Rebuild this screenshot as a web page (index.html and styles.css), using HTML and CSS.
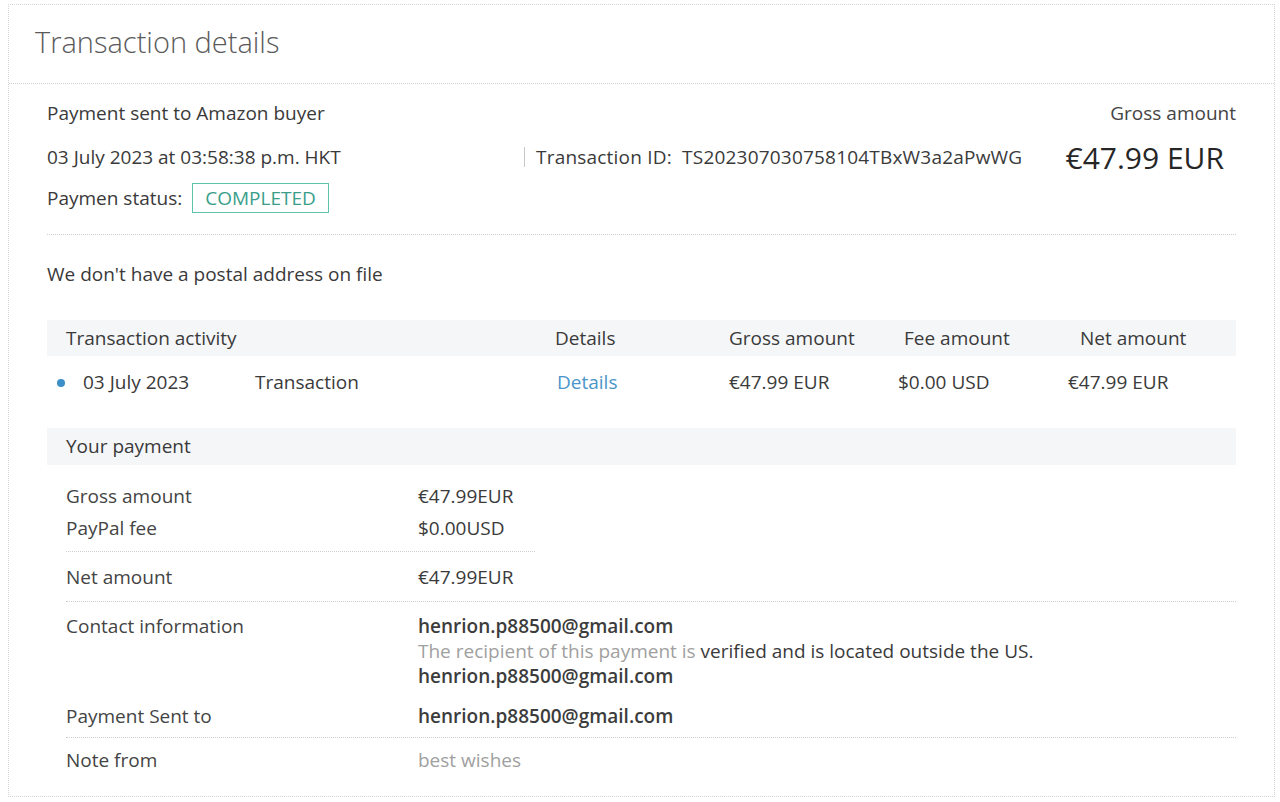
FILE: index.html
```html
<!DOCTYPE html>
<html lang="en">
<head>
    <meta charset="UTF-8">
    <title>Transaction details</title>
    <link rel="stylesheet" href="styles.css">
</head>
<body>
    <div class="card">
        <div class="card-head">
            <h1>Transaction details</h1>
        </div>

        <div class="card-body">
            <div class="summary">
                <div class="sum-row">
                    <span>Payment sent to Amazon buyer</span>
                    <span class="gross-label">Gross amount</span>
                </div>
                <div class="sum-row date-row">
                    <span class="date">03 July 2023 at 03:58:38 p.m. HKT</span>
                    <span class="txid">Transaction ID:&nbsp;&nbsp;TS202307030758104TBxW3a2aPwWG</span>
                    <span class="gross-value">€47.99 EUR</span>
                </div>
                <div class="sum-row status-row">
                    <span>Paymen status:</span>
                    <span class="badge">COMPLETED</span>
                </div>
            </div>

            <p class="address">We don't have a postal address on file</p>

            <div class="activity">
                <div class="act-row act-head">
                    <span>Transaction activity</span>
                    <span class="shift-2">Details</span>
                    <span>Gross amount</span>
                    <span class="shift-6">Fee amount</span>
                    <span class="shift-12">Net amount</span>
                </div>
                <div class="act-row act-item">
                    <span class="act-main">
                        <span class="dot"></span>
                        <span class="act-date">03 July 2023</span>
                        <span>Transaction</span>
                    </span>
                    <a href="#" class="link">Details</a>
                    <span>€47.99 EUR</span>
                    <span>$0.00 USD</span>
                    <span>€47.99 EUR</span>
                </div>
            </div>

            <div class="section-bar">Your payment</div>

            <div class="pay-block pay-short">
                <div class="pay-row"><span class="pay-label">Gross amount</span><span>€47.99EUR</span></div>
                <div class="pay-row"><span class="pay-label">PayPal fee</span><span>$0.00USD</span></div>
            </div>
            <div class="pay-block pay-net">
                <div class="pay-row"><span class="pay-label">Net amount</span><span>€47.99EUR</span></div>
            </div>
            <div class="pay-block pay-contact">
                <div class="pay-row">
                    <span class="pay-label">Contact information</span>
                    <div class="pay-lines">
                        <span class="email">henrion.p88500@gmail.com</span>
                        <span><span class="muted">The recipient of this payment is</span> verified and is located outside the US.</span>
                        <span class="email">henrion.p88500@gmail.com</span>
                    </div>
                </div>
                <div class="pay-row sent-row">
                    <span class="pay-label">Payment Sent to</span>
                    <span class="email">henrion.p88500@gmail.com</span>
                </div>
            </div>
            <div class="pay-block pay-note">
                <div class="pay-row"><span class="pay-label">Note from</span><span class="muted">best wishes</span></div>
            </div>
        </div>
    </div>
</body>
</html>
```

FILE: styles.css
```css
* {
    margin: 0;
    padding: 0;
    box-sizing: border-box;
}

body {
    font-family: 'Open Sans', 'Noto Sans', sans-serif;
    font-size: 19px;
    line-height: 25px;
    color: #3a3a3a;
    background: #fff;
    padding: 4px 5px 5px 8px;
}

.card {
    border: 1px dotted #d4d4d4;
    height: 793px;
}

.card-head {
    height: 79px;
    border-bottom: 1px dotted #d0d0d0;
    padding: 18px 0 0 26px;
}

.card-head h1 {
    font-size: 29px;
    font-weight: 300;
    line-height: 38px;
    color: #5a5a5a;
}

.card-body {
    padding: 14px 38px 0 38px;
}

/* summary */
.summary {
    border-bottom: 1px dotted #d0d0d0;
    padding-bottom: 17px;
}

.sum-row {
    display: flex;
    align-items: center;
    height: 30px;
}

.gross-label {
    margin-left: auto;
    color: #444;
}

.date-row {
    height: 44px;
    margin-top: 7px;
}

.date {
    width: 477px;
}

.txid {
    border-left: 1px solid #c8c8c8;
    padding-left: 11px;
    line-height: 20px;
    letter-spacing: 0.2px;
}

.gross-value {
    margin-left: auto;
    margin-right: 12px;
    font-size: 30px;
    color: #262626;
}

.status-row {
    height: 38px;
}

.badge {
    margin-left: 10px;
    border: 1px solid #5cc4ad;
    color: #3a9e8a;
    padding: 2px 12px;
    line-height: 24px;
}

.address {
    padding: 27px 0 33px;
}

/* activity table */
.act-row {
    display: grid;
    grid-template-columns: 491px 172px 169px 170px 1fr;
    align-items: center;
    padding-left: 19px;
}

.act-head {
    background: #f5f6f8;
    height: 36px;
}

.shift-2 { margin-left: -2px; }
.shift-6 { margin-left: 6px; }
.shift-12 { margin-left: 12px; }

.act-item {
    height: 53px;
}

.act-main {
    display: flex;
    align-items: center;
    margin-left: -9px;
}

.dot {
    width: 8px;
    height: 8px;
    border-radius: 50%;
    background: #3d8fca;
    margin-right: 18px;
}

.act-date {
    width: 172px;
}

.link {
    color: #4a95c9;
    text-decoration: none;
}

.section-bar {
    margin-top: 19px;
    background: #f5f6f8;
    height: 37px;
    line-height: 37px;
    padding-left: 19px;
}

/* your payment */
.pay-block {
    margin-left: 19px;
}

.pay-row {
    display: flex;
}

.pay-label {
    width: 352px;
    flex-shrink: 0;
    color: #444;
}

.pay-short {
    width: 469px;
    padding: 19px 0 10px;
    border-bottom: 1px dotted #cfcfcf;
}

.pay-short .pay-row + .pay-row {
    margin-top: 7px;
}

.pay-net {
    padding: 13px 0 11px;
    border-bottom: 1px dotted #cfcfcf;
}

.pay-contact {
    padding: 12px 0 8px;
    border-bottom: 1px dotted #cfcfcf;
}

.pay-lines {
    display: flex;
    flex-direction: column;
}

.email {
    color: #3c3c3c;
    font-weight: 600;
}

.muted {
    color: #a0a0a0;
}

.sent-row {
    margin-top: 15px;
}

.pay-note {
    padding-top: 10px;
}
```
